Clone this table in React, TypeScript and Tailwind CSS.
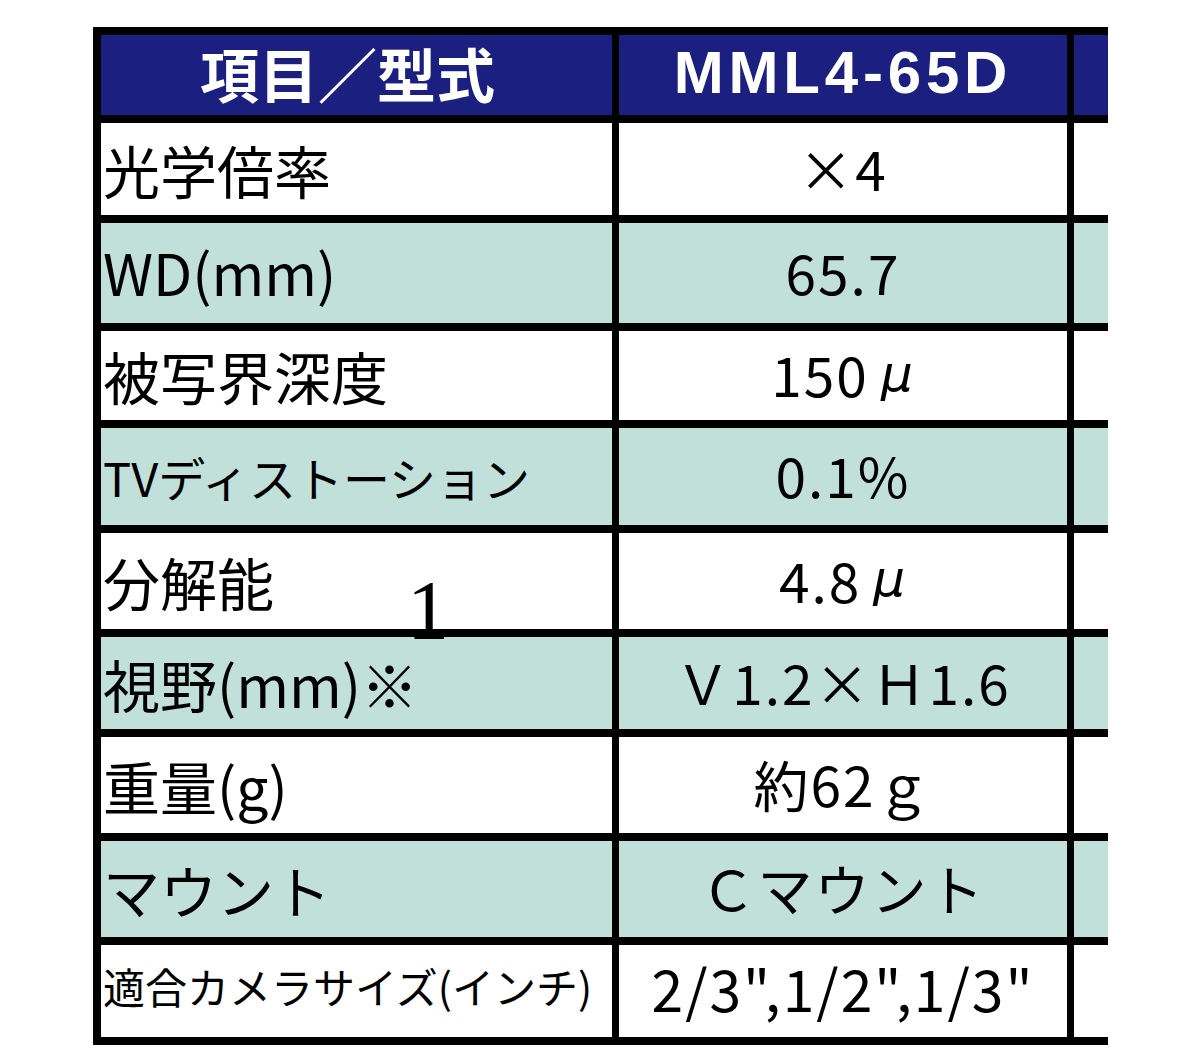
import React from 'react';

type Row = {
  label: string;
  value: React.ReactNode;
  labelClass: string;
  valueClass?: string;
  teal: boolean;
};

const mu = <span className="ml-[12px] italic font-['DejaVu_Sans',sans-serif] text-[50px]">μ</span>;

const rows: Row[] = [
  { label: '光学倍率', value: '×4', labelClass: 'text-[57px]', teal: false },
  { label: 'WD(mm)', value: '65.7', labelClass: 'text-[57px] pb-[4px]', teal: true },
  { label: '被写界深度', value: <>150{mu}</>, labelClass: 'text-[57px]', teal: false },
  { label: 'TVディストーション', value: '0.1%', labelClass: 'text-[47px]', teal: true },
  { label: '分解能', value: <>4.8{mu}</>, labelClass: 'text-[57px]', teal: false },
  { label: '視野(mm)※', value: 'Ｖ1.2×Ｈ1.6', labelClass: 'text-[57px]', teal: true },
  { label: '重量(g)', value: '約62ｇ', labelClass: 'text-[57px]', teal: false },
  { label: 'マウント', value: 'Ｃマウント', labelClass: 'text-[57px]', teal: true },
  {
    label: '適合カメラサイズ(インチ)',
    value: '2/3",1/2",1/3"',
    labelClass: 'text-[42px] pb-[10px]',
    valueClass: 'text-[57px] tracking-[2px] pb-[8px]',
    teal: false,
  },
];

export default function App() {
  return (
    <div className="relative min-h-screen bg-white font-['Noto_Sans_CJK_JP',sans-serif] text-black">
      <div className="pt-[27px] pl-[93px]">
        <div className="grid w-[1015px] grid-cols-[511px_448px_1fr] grid-rows-[80px_92px_100px_89px_97px_96px_92px_96px_96px_92px] gap-x-[7px] gap-y-[8px] bg-black pt-[8px] pb-[8px] pl-[8px]">
          {/* header */}
          <div className="flex items-center justify-center pr-[18px] pb-[6px] bg-[#1b1f7f] text-[59px] font-bold text-white leading-none">
            項目／型式
          </div>
          <div className="flex items-center justify-center pb-[4px] bg-[#1b1f7f] font-['Liberation_Sans',sans-serif] text-[60px] font-bold tracking-[0.08em] text-white leading-none">
            MML4-65D
          </div>
          <div className="bg-[#1b1f7f]" />

          {rows.map((r) => {
            const bg = r.teal ? 'bg-[#c1e0da]' : 'bg-white';
            return (
              <React.Fragment key={r.label}>
                <div className={`flex items-center pl-[2px] leading-none whitespace-nowrap ${bg} ${r.labelClass}`}>
                  {r.label}
                </div>
                <div
                  className={`flex items-center justify-center leading-none whitespace-nowrap ${bg} ${
                    r.valueClass ?? 'text-[55px] tracking-[2px] pb-[4px]'
                  }`}
                >
                  {r.value}
                </div>
                <div className={bg} />
              </React.Fragment>
            );
          })}
        </div>
      </div>

      {/* stray glyph lying over the table */}
      <span className="absolute left-[407px] top-[569px] font-['Liberation_Serif',serif] text-[84px] leading-none">
        1
      </span>
    </div>
  );
}
